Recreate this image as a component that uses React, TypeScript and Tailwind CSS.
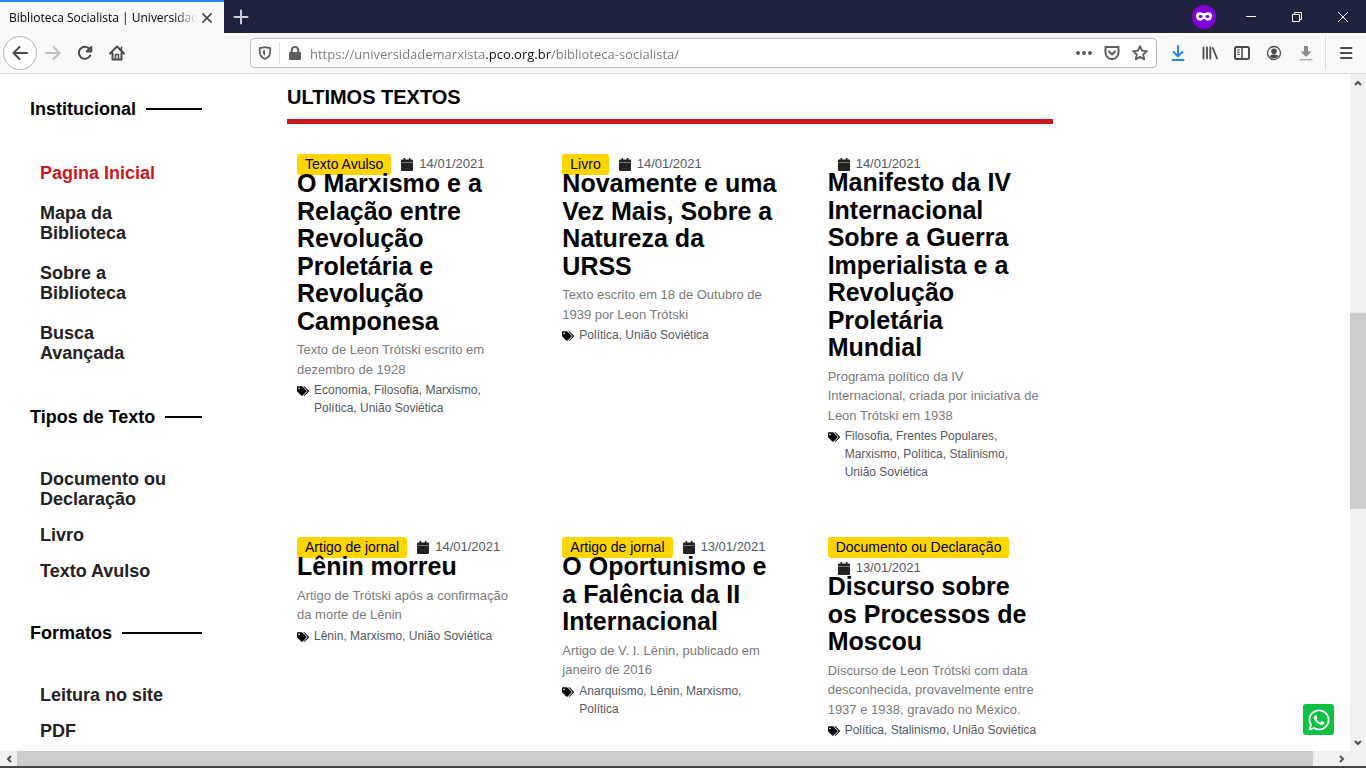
import React from "react";
import { FaTags, FaWhatsapp } from "react-icons/fa";

type Article = {
  kind?: string;
  date: string;
  title: string;
  excerpt: string;
  tags: string[];
};

const articles: Article[] = [
  {
    kind: "Texto Avulso",
    date: "14/01/2021",
    title: "O Marxismo e a Relação entre Revolução Proletária e Revolução Camponesa",
    excerpt: "Texto de Leon Trótski escrito em dezembro de 1928",
    tags: ["Economia", "Filosofia", "Marxismo", "Política", "União Soviética"],
  },
  {
    kind: "Livro",
    date: "14/01/2021",
    title: "Novamente e uma Vez Mais, Sobre a Natureza da URSS",
    excerpt: "Texto escrito em 18 de Outubro de 1939 por Leon Trótski",
    tags: ["Política", "União Soviética"],
  },
  {
    date: "14/01/2021",
    title: "Manifesto da IV Internacional Sobre a Guerra Imperialista e a Revolução Proletária Mundial",
    excerpt: "Programa político da IV Internacional, criada por iniciativa de Leon Trótski em 1938",
    tags: ["Filosofia", "Frentes Populares", "Marxismo", "Política", "Stalinismo", "União Soviética"],
  },
  {
    kind: "Artigo de jornal",
    date: "14/01/2021",
    title: "Lênin morreu",
    excerpt: "Artigo de Trótski após a confirmação da morte de Lênin",
    tags: ["Lênin", "Marxismo", "União Soviética"],
  },
  {
    kind: "Artigo de jornal",
    date: "13/01/2021",
    title: "O Oportunismo e a Falência da II Internacional",
    excerpt: "Artigo de V. I. Lênin, publicado em janeiro de 2016",
    tags: ["Anarquismo", "Lênin", "Marxismo", "Política"],
  },
  {
    kind: "Documento ou Declaração",
    date: "13/01/2021",
    title: "Discurso sobre os Processos de Moscou",
    excerpt: "Discurso de Leon Trótski com data desconhecida, provavelmente entre 1937 e 1938, gravado no México.",
    tags: ["Política", "Stalinismo", "União Soviética"],
  },
];

function IconButton({ label, className = "", children }: { label: string; className?: string; children: React.ReactNode }) {
  return (
    <button type="button" aria-label={label} className={`flex h-8 w-8 shrink-0 items-center justify-center ${className}`}>
      {children}
    </button>
  );
}

function Icon({ children, className = "h-4 w-4" }: { children: React.ReactNode; className?: string }) {
  return (
    <svg viewBox="0 0 16 16" className={className} fill="none" stroke="currentColor" strokeWidth="2" strokeLinecap="round" strokeLinejoin="round" aria-hidden="true">
      {children}
    </svg>
  );
}

function TabStrip() {
  return (
    <header className="flex h-[33px] shrink-0 items-stretch bg-[#202340] text-white">
      <div className="flex w-56 shrink-0 items-center border-t-2 border-[#1f87f0] bg-[#f9f9fa] pr-[7px] pl-[9px] text-black">
        <span className="min-w-0 flex-1 overflow-hidden font-['Open_Sans','Noto_Sans',sans-serif] text-xs whitespace-nowrap [mask-image:linear-gradient(to_right,black_88%,transparent)]">
          Biblioteca Socialista | Universidade Marxista
        </span>
        <button type="button" aria-label="Fechar aba" className="flex h-5 w-5 items-center justify-center text-[#3f3f42]">
          <Icon className="h-3 w-3">
            <path d="M2.500 2.500l11 11M13.500 2.500l-11 11" />
          </Icon>
        </button>
      </div>
      <button type="button" aria-label="Nova aba" className="flex w-[34px] items-center justify-center text-[#d0d0d6]">
        <Icon>
          <path d="M8 1.500v13M1.500 8h13" />
        </Icon>
      </button>
      <div className="flex flex-1 items-center justify-end">
        <span className="flex h-6 w-6 items-center justify-center rounded-full bg-[#8000d7]">
          <svg viewBox="0 0 16 9" className="h-[9px] w-4" aria-hidden="true">
            <path fill="#fff" fillRule="evenodd" d="M3.500.300C1.200.300 0 1.500 0 4s1.500 4.700 4 4.700c2.200 0 2.700-1.700 4-1.700s1.800 1.700 4 1.700c2.500 0 4-2.200 4-4.700S14.800.300 12.500.300C10.200.300 9.500 1.300 8 1.300S5.800.300 3.500.300zM4.700 3c1.200 0 2 .800 2 1.500S5.900 5.900 4.700 5.900 2.500 5.300 2.500 4.500 3.500 3 4.700 3zm6.600 0c1.200 0 2.200.700 2.200 1.500s-1 1.400-2.200 1.400-2-.700-2-1.400.800-1.500 2-1.500z" />
          </svg>
        </span>
        <div className="ml-3 flex self-stretch">
          <button type="button" aria-label="Minimizar" className="flex w-[46px] items-center justify-center">
            <svg viewBox="0 0 10 10" className="h-2.5 w-2.5" aria-hidden="true"><path d="M0 4.500h10" stroke="#fff" /></svg>
          </button>
          <button type="button" aria-label="Restaurar" className="flex w-[46px] items-center justify-center">
            <svg viewBox="0 0 10 10" className="h-2.5 w-2.5" fill="none" stroke="#fff" aria-hidden="true"><path d="M.500 2.500h7v7h-7zM2.500 2.500v-2h7v7h-2" /></svg>
          </button>
          <button type="button" aria-label="Fechar" className="flex w-[46px] items-center justify-center">
            <svg viewBox="0 0 10 10" className="h-2.5 w-2.5" stroke="#fff" aria-hidden="true"><path d="M0 0l10 10M10 0L0 10" /></svg>
          </button>
        </div>
      </div>
    </header>
  );
}

function Toolbar() {
  return (
    <div className="flex h-[41px] shrink-0 items-center border-b border-[#dcdcdc] bg-[#f9f9fa] pl-[3px] text-[#4a4a4e]">
      <button type="button" aria-label="Voltar" className="flex h-[34px] w-[34px] items-center justify-center rounded-full border border-[#b5b5b5] bg-white">
        <Icon><path d="M15 8H1.500M7.500 2L1.500 8l6 6" /></Icon>
      </button>
      <IconButton label="Avançar" className="text-[#bdbdbf]">
        <Icon><path d="M1 8h13.500M8.500 2l6 6-6 6" /></Icon>
      </IconButton>
      <IconButton label="Recarregar">
        <Icon><path d="M13.200 10.500A6 6 0 1 1 12.500 4M14.300 2v4.500H9.800z" /></Icon>
      </IconButton>
      <IconButton label="Página inicial">
        <Icon>
          <path d="M1 8.500L8 1.500l7 7M3.500 8v6.500h9V8" />
          <path d="M6.500 14V9.500h3V14" strokeWidth="1.500" />
          <path d="M12.500 2.200v3" strokeWidth="1.500" />
        </Icon>
      </IconButton>

      <div className="ml-[117px] flex h-[30px] min-w-0 flex-1 items-center rounded-sm border border-[#b8b8ba] bg-white">
        <button type="button" aria-label="Proteção contra rastreamento" className="flex h-full w-7 items-center justify-center text-[#5c5c60]">
          <Icon className="h-3.5 w-3.5">
            <path d="M8 1.200L14 2.500v4c0 4-2.300 6.700-6 8.300-3.700-1.600-6-4.300-6-8.300v-4z" />
            <path d="M8 4.800v6.200c-1.600-1-2.500-2.500-2.500-4.500V5.200z" fill="currentColor" stroke="none" />
          </Icon>
        </button>
        <span className="h-[22px] w-px bg-[#dedede]" />
        <button type="button" aria-label="Conexão segura" className="flex h-full w-[30px] items-center justify-center text-[#605d5d]">
          <Icon>
            <path d="M4.700 8V5.200a3.300 3.300 0 0 1 6.600 0V8" />
            <rect x="2" y="7" width="12" height="8" rx="1" fill="currentColor" stroke="none" />
          </Icon>
        </button>
        <input
          type="text"
          aria-label="Endereço"
          defaultValue="https://universidademarxista.pco.org.br/biblioteca-socialista/"
          className="h-full min-w-0 flex-1 bg-[linear-gradient(to_right,#78787c_176px,#0c0c0d_176px,#0c0c0d_241px,#78787c_241px)] bg-clip-text pt-0.5 font-['Open_Sans','Noto_Sans',sans-serif] text-[13px] text-transparent outline-none"
        />
        <div className="flex items-center pr-0.5 text-[#5c5c60]">
          <button type="button" aria-label="Ações da página" className="flex h-7 w-7 items-center justify-center">
            <Icon>
              <g fill="currentColor" stroke="none"><circle cx="2" cy="8" r="2" /><circle cx="8" cy="8" r="2" /><circle cx="14" cy="8" r="2" /></g>
            </Icon>
          </button>
          <button type="button" aria-label="Salvar no Pocket" className="flex h-7 w-7 items-center justify-center">
            <Icon><path d="M1.500 2h13v5.500a6.500 6.500 0 0 1-13 0zM5 6.500l3 3 3-3" /></Icon>
          </button>
          <button type="button" aria-label="Adicionar aos favoritos" className="flex h-7 w-7 items-center justify-center">
            <Icon><path d="M8 1.200l2 4.500 4.900.500-3.700 3.300 1.100 4.900L8 11.900l-4.300 2.500 1.100-4.900L1.100 6.200 6 5.700z" strokeWidth="1.800" /></Icon>
          </button>
        </div>
      </div>

      <div className="ml-[5px] flex items-center">
        <IconButton label="Downloads" className="text-[#1f87f0]">
          <Icon><path d="M8 1v10M3.500 7L8 11.300 12.500 7M2.500 15h11" /></Icon>
        </IconButton>
        <IconButton label="Biblioteca">
          <Icon><path d="M1.500 2.500v11M5 2.500v11M8.300 2.500v11M10.800 3l4.200 10.500" strokeWidth="1.800" /></Icon>
        </IconButton>
        <IconButton label="Barras laterais">
          <Icon>
            <rect x="1" y="2" width="14" height="12" rx="1.500" />
            <path d="M8 2v12" strokeWidth="1.500" />
            <path d="M3.500 5h2M3.500 7.200h2M3.500 9.400h2" strokeWidth="1" />
          </Icon>
        </IconButton>
        <IconButton label="Conta">
          <Icon>
            <circle cx="8" cy="8" r="6.500" strokeWidth="1.300" />
            <circle cx="8" cy="6.200" r="2.800" fill="currentColor" stroke="none" />
            <path d="M3.500 11c1.200-1 2.500-1.500 4.500-1.500s3.300.500 4.500 1.500c-1 1.500-2.700 2.200-4.500 2.200S4.500 12.500 3.500 11z" fill="currentColor" stroke="none" />
          </Icon>
        </IconButton>
        <IconButton label="Baixar vídeo" className="text-[#8a8d8d]">
          <Icon>
            <path d="M6 1h4v5.500h3.500L8 12 2.500 6.500H6z" fill="currentColor" stroke="none" />
            <path d="M2 14.800h12" strokeWidth="1" />
          </Icon>
        </IconButton>
        <span className="ml-[3px] h-[34px] w-px bg-[#dcdcdc]" />
        <button type="button" aria-label="Abrir menu" className="flex h-8 w-10 items-center justify-center">
          <Icon><path d="M3 3h10.500M3 8h10.500M3 13h10.500" /></Icon>
        </button>
      </div>
    </div>
  );
}

function SideSection({ title, items, roomy = false, current }: { title: string; items: string[]; roomy?: boolean; current?: string }) {
  return (
    <section className={roomy ? "pb-11" : "pb-[42px]"}>
      <h3 className="flex items-center gap-2.5 text-lg leading-5 font-bold text-black">
        {title}
        <span className="h-0.5 flex-1 bg-black" />
      </h3>
      <ul className={`flex flex-col pr-7 pl-2.5 text-lg leading-5 font-bold text-[#222] ${roomy ? "gap-5 pt-11" : "gap-4 pt-[42px]"}`}>
        {items.map((item) => (
          <li key={item}>
            <a href="#" className={item === current ? "block text-[#cd171f]" : "block"}>{item}</a>
          </li>
        ))}
      </ul>
    </section>
  );
}

function CalendarIcon() {
  return (
    <svg viewBox="0 0 12 13" className="h-[13px] w-3" fill="#222" aria-hidden="true">
      <path d="M2.500 0h1.700v1.500h3.600V0h1.700v1.500H11a1 1 0 0 1 1 1V4H0V2.500a1 1 0 0 1 1-1h1.500z" />
      <path d="M0 4h12v1H0z" fill="#777" />
      <path d="M0 5h12v7a1 1 0 0 1-1 1H1a1 1 0 0 1-1-1z" />
    </svg>
  );
}

function ArticleCard({ article }: { article: Article }) {
  return (
    <article className="px-2.5">
      <div className="flex flex-wrap items-start">
        {article.kind && (
          <a href="#" className="rounded-[3px] bg-[#ffd500] px-2 text-sm leading-[21px] text-black">{article.kind}</a>
        )}
        <span className="ml-2.5 flex items-center gap-1.5 text-[13px] leading-5 text-[#54595f]">
          <CalendarIcon />
          {article.date}
        </span>
      </div>
      <h2 className="relative -mt-[5px] text-[25px] leading-[1.1] font-bold text-black">
        <a href="#">{article.title}</a>
      </h2>
      <p className="pt-[5px] text-[13px] leading-[1.5] text-[#7a7a7a]">{article.excerpt}</p>
      <div className="flex items-start gap-[5px] pt-0.5 pr-1 text-xs leading-[18px] text-[#54595f]">
        <FaTags className="mt-1 h-3 w-3 shrink-0 text-black" aria-hidden="true" />
        <p>
          {article.tags.map((tag, i) => (
            <React.Fragment key={tag}>
              {i > 0 && ", "}
              <a href="#">{tag}</a>
            </React.Fragment>
          ))}
        </p>
      </div>
    </article>
  );
}

function Chevron({ d }: { d: string }) {
  return (
    <svg viewBox="0 0 8 8" className="h-2 w-2" fill="none" stroke="#505050" strokeWidth="2" aria-hidden="true">
      <path d={d} />
    </svg>
  );
}

export default function App() {
  return (
    <div className="flex h-screen flex-col overflow-hidden bg-white font-['Liberation_Sans',Arial,sans-serif]">
      <TabStrip />
      <Toolbar />

      <div className="relative flex min-h-0 flex-1">
        <div className="flex min-w-0 flex-1 overflow-hidden">
          <aside className="w-[202px] shrink-0 pt-[25px] pl-[30px]">
            <SideSection
              title="Institucional"
              items={["Pagina Inicial", "Mapa da Biblioteca", "Sobre a Biblioteca", "Busca Avançada"]}
              current="Pagina Inicial"
              roomy
            />
            <SideSection title="Tipos de Texto" items={["Documento ou Declaração", "Livro", "Texto Avulso"]} />
            <SideSection title="Formatos" items={["Leitura no site", "PDF"]} />
          </aside>

          <main className="ml-[85px] w-full max-w-[766px] pt-3">
            <h1 className="border-b-[5px] border-[#cd171f] pb-[11px] text-xl leading-[22px] font-bold text-black">ULTIMOS TEXTOS</h1>
            <div className="grid grid-cols-3 gap-x-[30px] gap-y-14 pt-[30px]">
              {articles.map((article) => (
                <ArticleCard key={article.title} article={article} />
              ))}
            </div>
          </main>
        </div>

        <a href="#" aria-label="WhatsApp" className="absolute right-8 bottom-4 flex h-[31px] w-[31px] items-center justify-center rounded-[3px] bg-[#0dc143] text-white">
          <FaWhatsapp className="h-6 w-6" aria-hidden="true" />
        </a>

        <div className="flex w-4 shrink-0 flex-col items-center bg-[#f0f1f1]">
          <span className="flex h-[17px] items-center"><Chevron d="M1 6l3-3 3 3" /></span>
          <span className="flex-[222]" />
          <span className="w-full flex-[196] bg-[#cdcdcd]" />
          <span className="flex-[225]" />
          <span className="flex h-[17px] items-center"><Chevron d="M1 2l3 3 3-3" /></span>
        </div>
      </div>

      <div className="flex h-[15px] shrink-0 items-center bg-[#f0f1f1] pr-4">
        <span className="flex w-[17px] justify-center"><Chevron d="M6 1L3 4l3 3" /></span>
        <span className="h-full flex-[1295] bg-[#cdcdcd]" />
        <span className="flex-[20]" />
        <span className="flex w-[17px] justify-center"><Chevron d="M2 1l3 3-3 3" /></span>
      </div>
      <div className="h-0.5 shrink-0 bg-[#454545]" />
    </div>
  );
}
